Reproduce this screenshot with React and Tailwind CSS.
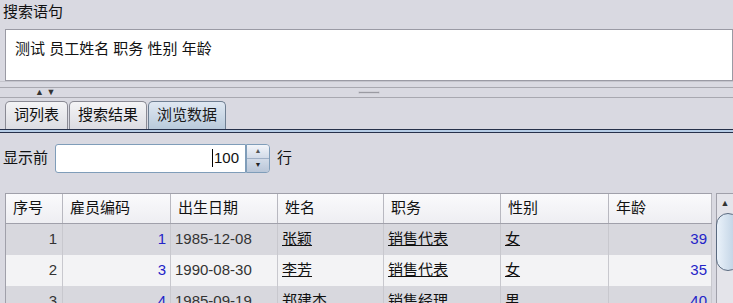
import React from 'react';

const font = { fontFamily: '"Liberation Sans", "Noto Sans CJK SC", sans-serif' };

const columns = [
  { key: 'no', label: '序号', w: 'w-[57px]' },
  { key: 'id', label: '雇员编码', w: 'w-[108px]' },
  { key: 'birth', label: '出生日期', w: 'w-[107px]' },
  { key: 'name', label: '姓名', w: 'w-[106px]' },
  { key: 'title', label: '职务', w: 'w-[117px]' },
  { key: 'sex', label: '性别', w: 'w-[108px]' },
  { key: 'age', label: '年龄', w: 'flex-1' },
];

const rows = [
  { no: 1, id: 1, birth: '1985-12-08', name: '张颖', title: '销售代表', sex: '女', age: 39 },
  { no: 2, id: 3, birth: '1990-08-30', name: '李芳', title: '销售代表', sex: '女', age: 35 },
  { no: 3, id: 4, birth: '1985-09-19', name: '郑建杰', title: '销售经理', sex: '男', age: 40 },
];

function Tab({ label, active }) {
  return (
    <div
      className={
        'h-[28px] px-[8px] flex items-center rounded-t-[5px] border border-b-0 text-[15px] ' +
        (active
          ? 'bg-gradient-to-b from-[#dfe8f2] to-[#b9cadb] border-[#6f7f92] text-[#1a1a1a]'
          : 'bg-gradient-to-b from-[#f4f4f6] to-[#dcdce2] border-[#8a8a94] text-[#111]')
      }
    >
      {label}
    </div>
  );
}

export default function App() {
  return (
    <div className="w-[733px] h-[303px] overflow-hidden bg-[#d9d9e1] text-[#111]" style={font}>
      <div className="pl-[3px] pt-[2px] h-[29px] text-[15px] leading-[20px]">搜索语句</div>
      <div className="ml-[5px] h-[52px] bg-white border border-[#9a9aa4] pl-[9px] pt-[8px] text-[15px]">
        测试 员工姓名 职务 性别 年龄
      </div>
      {/* splitter */}
      <div className="relative h-[18px] border-t border-[#c4c4cc]">
        <div className="absolute left-0 right-0 top-[5px] h-px bg-[#a8a8b0]"></div>
        <div className="absolute left-0 right-0 top-[15px] h-px bg-[#a8a8b0]"></div>
        <div className="absolute left-[35px] top-[5px] text-[9px] leading-[10px] text-[#333]">▲ ▼</div>
        <div className="absolute left-[358px] top-[9px] w-[22px] h-[3px] rounded-[2px] bg-[#9a9aa2] border border-[#cfcfd6]"></div>
      </div>
      {/* tabs */}
      <div className="flex items-end gap-px pl-[5px] pt-[2px]">
        <Tab label="词列表" />
        <Tab label="搜索结果" />
        <Tab label="浏览数据" active />
      </div>
      <div className="h-px bg-[#26304a]"></div>
      <div className="h-[2px] bg-[#b7cde6]"></div>
      <div className="h-px bg-[#26304a]"></div>
      {/* show first N */}
      <div className="flex items-center h-[46px] pt-[4px]">
        <span className="pl-[3px] w-[55px] text-[15px]">显示前</span>
        <div className="h-[29px] w-[191px] bg-white border border-[#7f9db9] rounded-l-[3px] flex items-center justify-end pr-[6px] text-[15px]">
          <span className="inline-block w-px h-[18px] bg-black mr-px"></span>100
        </div>
        <div className="h-[29px] w-[24px] flex flex-col border border-[#7f9db9] rounded-r-[4px] overflow-hidden">
          <div className="flex-1 flex items-center justify-center bg-gradient-to-b from-[#f2f5fa] to-[#d2dbe8] border-b border-[#9fb0c6] text-[7px] text-[#555]">▲</div>
          <div className="flex-1 flex items-center justify-center bg-gradient-to-b from-[#d2dbe8] to-[#b9c6d8] text-[7px] text-[#222]">▼</div>
        </div>
        <span className="pl-[7px] text-[15px]">行</span>
      </div>
      {/* table */}
      <div className="flex mt-[14px] pl-[5px]">
        <div className="w-[707px] border-l border-t border-[#a0a0aa]">
          <div className="flex h-[30px] bg-gradient-to-b from-[#fafafc] to-[#eeeef2] border-b border-[#a0a0aa]">
            {columns.map((c) => (
              <div key={c.key} className={c.w + ' border-r border-[#b8b8c0] flex items-center pl-[7px] text-[15px]'}>
                {c.label}
              </div>
            ))}
          </div>
          {rows.map((r, i) => (
            <div key={r.no} className={'flex h-[31px] text-[15px] ' + (i % 2 === 0 ? 'bg-[#d8d8de]' : 'bg-[#f3f3f5]')}>
              <div className="w-[57px] border-r border-[#c8c8ce] flex items-center justify-end pr-[5px] text-[#333]">{r.no}</div>
              <div className="w-[108px] border-r border-[#c8c8ce] flex items-center justify-end pr-[4px] text-[#2424c8]">{r.id}</div>
              <div className="w-[107px] border-r border-[#c8c8ce] flex items-center pl-[4px] text-[#333]">{r.birth}</div>
              <div className="w-[106px] border-r border-[#c8c8ce] flex items-center pl-[4px]"><span className="underline">{r.name}</span></div>
              <div className="w-[117px] border-r border-[#c8c8ce] flex items-center pl-[4px]"><span className="underline">{r.title}</span></div>
              <div className="w-[108px] border-r border-[#c8c8ce] flex items-center pl-[4px]"><span className="underline">{r.sex}</span></div>
              <div className="flex-1 border-r border-[#c8c8ce] flex items-center justify-end pr-[4px] text-[#2424c8]">{r.age}</div>
            </div>
          ))}
        </div>
        <div className="ml-[4px] w-[17px] border-l border-t border-[#a0a0aa] bg-[#e4e4ea] flex flex-col items-center">
          <div className="text-[9px] leading-[14px] mt-[2px] text-[#333]">▲</div>
          <div className="mt-[3px] ml-[6px] w-[24px] h-[58px] rounded-full border border-[#5a6a80] bg-gradient-to-r from-[#eaf2fa] to-[#b8cce0]"></div>
        </div>
      </div>
    </div>
  );
}
